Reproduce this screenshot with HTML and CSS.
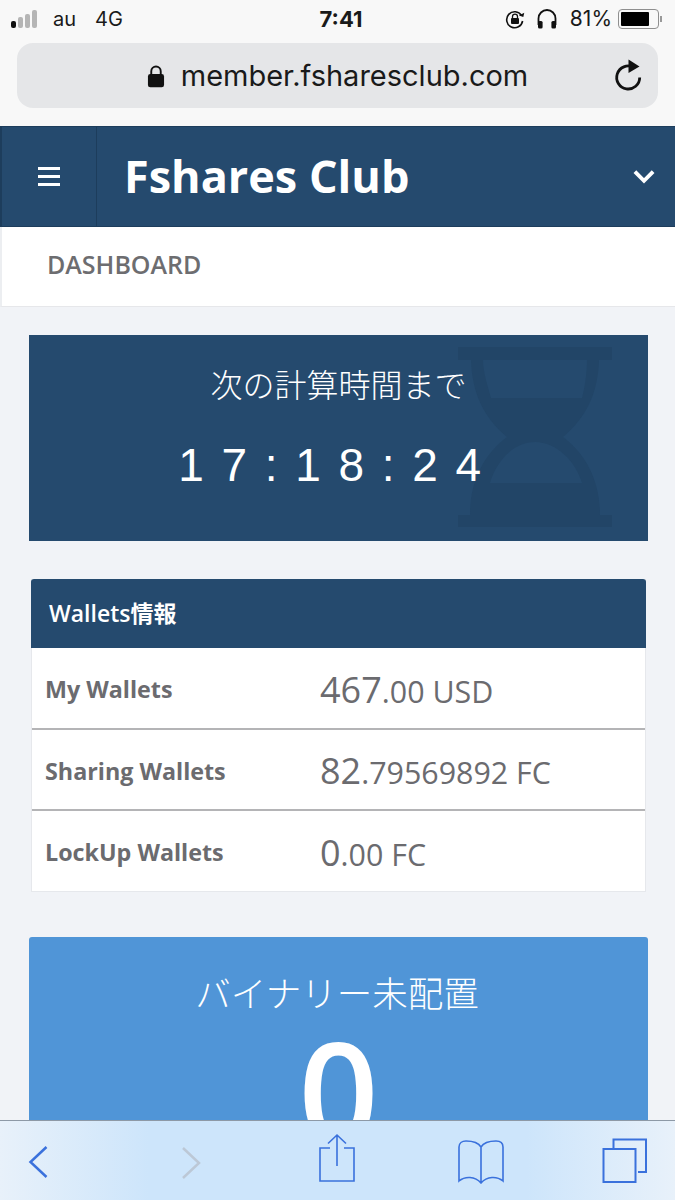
FILE: index.html
```html
<!DOCTYPE html>
<html lang="en">
<head>
    <meta charset="UTF-8">
    <meta name="viewport" content="width=device-width, initial-scale=1.0">
    <title>Fshares Club</title>
    <link rel="stylesheet" href="styles.css">
</head>
<body>

<div class="safari-top">
    <div class="status-bar">
        <div class="status-left">
            <span class="signal">
                <i class="on"></i><i></i><i></i><i></i>
            </span>
            <span class="carrier">au</span>
            <span class="carrier">4G</span>
        </div>
        <div class="status-time">7:41</div>
        <div class="status-right">
            <svg class="icon-rotation" viewBox="0 0 20 20" width="20" height="20">
                <path d="M16.5 6.5A8 8 0 1 0 17.6 12" fill="none" stroke="#111" stroke-width="1.6"/>
                <path d="M14.2 7.2h4.6l-.4-4.4z" fill="#111" transform="rotate(18 16 6)"/>
                <rect x="6" y="9" width="8" height="6" rx="1" fill="#111"/>
                <path d="M7.5 9.5V7.6a2.5 2.5 0 0 1 5 0v1.9" fill="none" stroke="#111" stroke-width="1.3"/>
            </svg>
            <svg class="icon-phones" viewBox="0 0 22 22" width="22" height="22">
                <path d="M2.5 17v-6.500a8.500 8.500 0 0 1 17 0V17" fill="none" stroke="#111" stroke-width="1.800"/>
                <rect x="2" y="13" width="4.600" height="7.500" rx="1.500" fill="#111"/>
                <rect x="15.400" y="13" width="4.600" height="7.500" rx="1.500" fill="#111"/>
            </svg>
            <span class="battery-pct">81%</span>
            <span class="battery"><span class="battery-fill"></span></span>
            <span class="battery-nub"></span>
        </div>
    </div>
    <div class="url-bar">
        <div class="url-text">
            <svg viewBox="0 0 19 24" width="18" height="24">
                <path d="M4.500 11V7a5 5 0 0 1 10 0v4" fill="none" stroke="#111" stroke-width="2"/>
                <rect x="1" y="10" width="17" height="14" rx="2.500" fill="#111"/>
            </svg>
            <span>member.fsharesclub.com</span>
        </div>
        <svg class="reload" viewBox="0 0 30 34" width="30" height="34">
            <path d="M20.500 9.300A11.500 11.500 0 1 0 26.700 19.500" fill="none" stroke="#111" stroke-width="2.800"/>
            <path d="M15.500 1.500L26.500 8.500L15.500 15z" fill="#111"/>
        </svg>
    </div>
</div>

<header class="top-nav">
    <div class="menu-btn">
        <span></span><span></span><span></span>
    </div>
    <div class="brand">Fshares Club</div>
    <svg class="chevron" viewBox="0 0 22 14" width="24" height="15">
        <path d="M2.500 2.500L11 11L19.500 2.500" fill="none" stroke="#fff" stroke-width="3.600"/>
    </svg>
</header>

<div class="breadcrumb">DASHBOARD</div>

<main class="content">
    <section class="timer-card">
        <svg class="hourglass" viewBox="0 0 154 180" width="154" height="180">
            <path fill-rule="evenodd" fill="#224567" d="M0 0H154V13H141C140 45 129 70 105 90C129 108 142 135 142 168H154V180H0V168H12C12 135 25 108 49 90C25 70 14 45 13 13H0Z M25 13H129C129 25 127 40 124 51H33C30 40 25 25 25 13Z M32 136C38 115 55 95 77 95C99 95 118 115 124 136Z"/>
        </svg>
        <p class="timer-title">次の計算時間まで</p>
        <p class="timer-count">17:18:24</p>
    </section>

    <section class="wallet-panel">
        <h3 class="wallet-head">Wallets情報</h3>
        <div class="wallet-row">
            <span class="wallet-name">My Wallets</span>
            <span class="wallet-value"><b>467</b>.00 USD</span>
        </div>
        <div class="wallet-row">
            <span class="wallet-name">Sharing Wallets</span>
            <span class="wallet-value"><b>82</b>.79569892 FC</span>
        </div>
        <div class="wallet-row">
            <span class="wallet-name">LockUp Wallets</span>
            <span class="wallet-value"><b>0</b>.00 FC</span>
        </div>
    </section>

    <section class="binary-card">
        <p class="binary-title">バイナリー未配置</p>
        <p class="binary-count">0</p>
    </section>
</main>

<footer class="safari-bottom">
    <svg viewBox="0 0 24 36" width="24" height="36" class="tool-back">
        <path d="M19.500 3L3.500 18L19.500 33" fill="none" stroke="#3a71dc" stroke-width="2.500"/>
    </svg>
    <svg viewBox="0 0 24 36" width="24" height="36" class="tool-forward">
        <path d="M6 3L22 18L6 33" fill="none" stroke="#bcc8d6" stroke-width="2.500"/>
    </svg>
    <svg viewBox="0 0 38 50" width="38" height="50" class="tool-share">
        <path d="M12 15H2V48H36V15H26" fill="none" stroke="#3a71dc" stroke-width="1.600"/>
        <path d="M19 33V2M10 10.500L19 2L28 10.500" fill="none" stroke="#3a71dc" stroke-width="1.600"/>
    </svg>
    <svg viewBox="0 0 48 46" width="48" height="46" class="tool-book">
        <path d="M24 8C21 3 15 2 9 2C5 2 2 4 2 8V42C8 37 18 37 24 44C30 37 40 37 46 42V8C46 4 43 2 39 2C33 2 27 3 24 8ZM24 8V44" fill="none" stroke="#3a71dc" stroke-width="1.600"/>
    </svg>
    <svg viewBox="0 0 46 46" width="46" height="46" class="tool-tabs">
        <rect x="1.500" y="11" width="32" height="33" fill="none" stroke="#3a71dc" stroke-width="2"/>
        <path d="M11.500 10V1.500H44V34H36" fill="none" stroke="#3a71dc" stroke-width="2"/>
    </svg>
</footer>

</body>
</html>
```

FILE: styles.css
```css
* {
    box-sizing: border-box;
}
html, body {
    margin: 0;
    height: 1200px;
    overflow: hidden;
}
body {
    font-family: "Open Sans", Arial, "Noto Sans CJK JP", sans-serif;
    background-color: #f1f3f7;
    color: #6b6b6f;
}
p, h3 {
    margin: 0;
}

/* browser chrome */
.safari-top {
    height: 126px;
    background-color: #f8f8f8;
    padding: 0 17px;
}
.status-bar {
    height: 43px;
    margin: 0 -17px;
    padding: 0 13px 6px 11px;
    display: grid;
    grid-template-columns: 1fr auto 1fr;
    align-items: center;
    font-family: Inter, "Liberation Sans", sans-serif;
    font-size: 21px;
    color: #1a1a1a;
}
.status-left {
    display: flex;
    align-items: center;
}
.signal {
    display: flex;
    align-items: flex-end;
    gap: 2px;
    width: 30px;
    margin-right: 12px;
}
.signal i {
    display: block;
    width: 5px;
    background-color: #b5b5b5;
    border-radius: 2px;
}
.signal i:nth-child(1) { height: 7px; }
.signal i:nth-child(2) { height: 11px; }
.signal i:nth-child(3) { height: 14px; }
.signal i:nth-child(4) { height: 18px; }
.signal i.on {
    background-color: #111;
}
.carrier {
    margin-right: 19px;
    font-size: 20px;
}
.status-time {
    margin-left: 9px;
    font-weight: 700;
    font-size: 22px;
}
.status-right {
    display: flex;
    align-items: center;
    justify-content: flex-end;
}
.icon-rotation {
    margin-right: 11px;
}
.icon-phones {
    margin-right: 12px;
}
.battery-pct {
    margin-right: 6px;
}
.battery {
    width: 41px;
    height: 20px;
    border: 1.500px solid #8f8f8f;
    border-radius: 4px;
    padding: 2px;
    display: block;
}
.battery-fill {
    display: block;
    width: 81%;
    height: 100%;
    background-color: #000;
    border-radius: 1px;
}
.battery-nub {
    width: 2px;
    height: 6px;
    margin-left: 1px;
    background-color: #999;
}
.url-bar {
    height: 65px;
    background-color: #e5e6e8;
    border-radius: 16px;
    display: flex;
    align-items: center;
    justify-content: center;
    position: relative;
}
.url-text {
    display: flex;
    align-items: center;
    gap: 16px;
    font-family: Inter, "Liberation Sans", sans-serif;
    font-size: 29px;
    color: #1a1a1a;
}
.reload {
    position: absolute;
    right: 15px;
    top: 15px;
}

/* site header */
.top-nav {
    height: 101px;
    background-color: #254a6e;
    border-top: 1px solid #1d3d5c;
    border-bottom: 1px solid #1d3d5c;
    border-left: 2px solid #1d3d5c;
    display: flex;
    align-items: center;
    color: #fff;
}
.menu-btn {
    width: 95px;
    height: 100%;
    border-right: 1px solid #1d3d5c;
    display: flex;
    flex-direction: column;
    align-items: center;
    justify-content: center;
    gap: 5px;
}
.menu-btn span {
    display: block;
    width: 22px;
    height: 3px;
    background-color: #fff;
}
.brand {
    flex: 1;
    padding: 0 0 3px 27px;
    font-size: 45px;
    font-weight: 700;
    white-space: nowrap;
}
.chevron {
    margin-right: 19px;
}
.breadcrumb {
    height: 80px;
    background-color: #fff;
    border-bottom: 1px solid #e6e7ea;
    border-left: 2px solid #eceef1;
    padding: 20px 0 0 45px;
    font-size: 25px;
    font-weight: 600;
    color: #6d6d70;
}

/* page content */
.content {
    padding: 28px 27px 0 29px;
}
.timer-card {
    height: 206px;
    background-color: #254a6e;
    position: relative;
    overflow: hidden;
    color: #fff;
    text-align: center;
    font-family: "Liberation Sans", "Noto Sans CJK JP", sans-serif;
}
.hourglass {
    position: absolute;
    left: 429px;
    top: 12px;
}
.timer-title {
    position: relative;
    padding-top: 28px;
    font-size: 32px;
    font-weight: 300;
    line-height: 47px;
}
.timer-count {
    position: relative;
    margin-top: 32px;
    font-size: 46px;
    line-height: 46px;
    letter-spacing: 17.700px;
}
.wallet-panel {
    margin: 38px 2px 0;
    background-color: #fff;
    border: 1px solid #e6e8ec;
    border-top: none;
}
.wallet-head {
    height: 69px;
    margin: 0 -1px;
    background-color: #254a6e;
    border-radius: 3px 3px 0 0;
    color: #fff;
    font-size: 23px;
    font-weight: 600;
    padding: 0 18px;
    line-height: 69px;
}
.wallet-row {
    height: 81px;
    display: flex;
    align-items: center;
    padding: 2px 0 0 14px;
    border-bottom: 2px solid #b4b4b6;
}
.wallet-row:first-of-type {
    height: 82px;
}
.wallet-row:last-child {
    height: 80px;
    border-bottom: none;
}
.wallet-name {
    width: 275px;
    margin-left: -1px;
    font-size: 23.300px;
    font-weight: 700;
}
.wallet-value {
    font-size: 30.400px;
}
.wallet-value b {
    font-size: 36px;
    font-weight: 400;
}
.binary-card {
    margin-top: 45px;
    height: 300px;
    background-color: #5095d7;
    border-radius: 3px;
    color: #fff;
    text-align: center;
    font-family: "Liberation Sans", "Noto Sans CJK JP", sans-serif;
}
.binary-title {
    padding: 33px 3px 0 0;
    font-size: 35.500px;
    font-weight: 300;
    line-height: 50px;
}
.binary-count {
    font-family: "Open Sans", Arial, sans-serif;
    font-size: 140px;
    line-height: 140px;
    font-weight: 600;
}

/* browser toolbar, lies over the page */
.safari-bottom {
    position: fixed;
    left: 0;
    right: 0;
    bottom: 0;
    height: 80px;
    border-top: 1px solid #8d99a6;
    background: linear-gradient(90deg, #e8f1fa 0%, #cde5fb 22%, #cde5fb 78%, #e8f1fa 100%);
}
.safari-bottom svg {
    position: absolute;
}
.tool-back { left: 27px; top: 23px; }
.tool-forward { left: 177px; top: 24px; }
.tool-share { left: 318px; top: 12px; }
.tool-book { left: 457px; top: 18px; }
.tool-tabs { left: 602px; top: 17px; }
```
